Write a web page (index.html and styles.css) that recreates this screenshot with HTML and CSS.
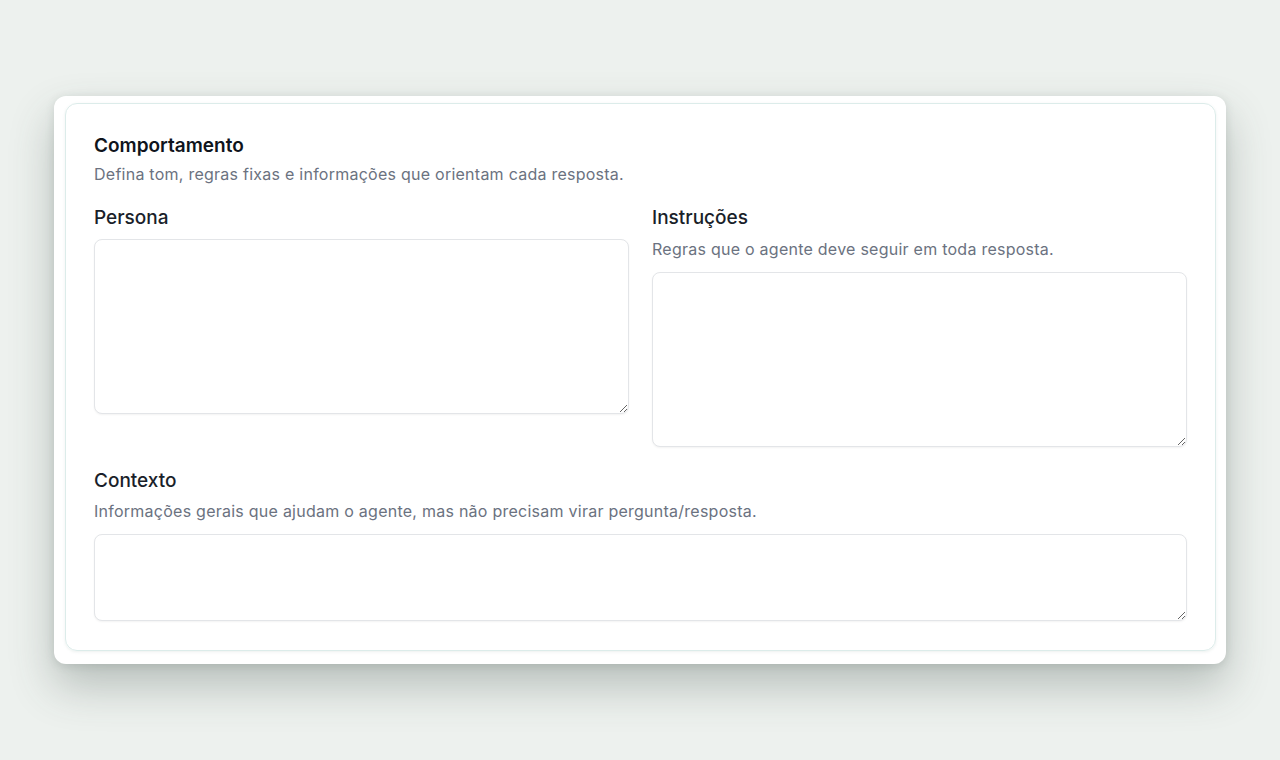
FILE: index.html
```html
<!DOCTYPE html>
<html lang="pt-BR">
<head>
    <meta charset="UTF-8">
    <title>Comportamento</title>
    <link rel="stylesheet" href="styles.css">
</head>
<body>

<div class="frame">
    <div class="card">
        <div class="card-head">
            <h2 class="card-title">Comportamento</h2>
            <p class="card-desc">Defina tom, regras fixas e informações que orientam cada resposta.</p>
        </div>

        <div class="field-row">
            <div class="field">
                <label class="field-label" for="persona">Persona</label>
                <textarea id="persona" class="field-input persona-input"></textarea>
            </div>
            <div class="field">
                <label class="field-label" for="instrucoes">Instruções</label>
                <p class="field-desc">Regras que o agente deve seguir em toda resposta.</p>
                <textarea id="instrucoes" class="field-input persona-input"></textarea>
            </div>
        </div>

        <div class="field field-wide">
            <label class="field-label" for="contexto">Contexto</label>
            <p class="field-desc">Informações gerais que ajudam o agente, mas não precisam virar pergunta/resposta.</p>
            <textarea id="contexto" class="field-input context-input"></textarea>
        </div>
    </div>
</div>

</body>
</html>
```

FILE: styles.css
```css
html, body, div, p, h2, label {
    padding: 0px;
    margin: 0px;
}

body {
    background: #edf1ee;
    font-family: Inter, "Noto Sans", "Liberation Sans", sans-serif;
    color: #111827;
    padding: 96px 54px 96px 54px;
    min-height: 760px;
    box-sizing: border-box;
}

.frame {
    background: #ffffff;
    border-radius: 12px;
    padding: 7px 10px 13px 11px;
    box-shadow: 0px 22px 44px rgba(60, 75, 68, 0.30), 0px 2px 10px rgba(60, 75, 68, 0.14);
}

.card {
    border: 1px solid #dcecea;
    border-radius: 12px;
    padding: 28px 28px 29px 28px;
    box-shadow: 0px 1px 3px rgba(120, 150, 140, 0.14);
}

.card-title {
    font-size: 19px;
    line-height: 28px;
    font-weight: 600;
    color: #0f141c;
}

.card-desc {
    margin-top: 3px;
    font-size: 16px;
    line-height: 22px;
    letter-spacing: 0.25px;
    color: #6b7280;
}

.field-row {
    display: grid;
    grid-template-columns: 1fr 1fr;
    column-gap: 23px;
    margin-top: 20px;
}

.field {
    display: flex;
    flex-direction: column;
}

.field-wide {
    margin-top: 21px;
}

.field-label {
    font-size: 19px;
    line-height: 26px;
    font-weight: 500;
    color: #1a1f2a;
}

.field-desc {
    margin-top: 7px;
    font-size: 16px;
    line-height: 22px;
    letter-spacing: 0.25px;
    color: #6b7280;
}

.field-wide .field-desc {
    margin-top: 6px;
}

.field-input {
    display: block;
    width: 100%;
    box-sizing: border-box;
    margin-top: 8px;
    border: 1px solid #e3e5e8;
    border-radius: 8px;
    background: #ffffff;
    font-family: inherit;
    font-size: 15px;
    padding: 10px 12px;
    outline: none;
    box-shadow: 0px 1px 2px rgba(0, 0, 0, 0.05);
}

.field-desc + .field-input {
    margin-top: 12px;
}

.persona-input {
    height: 175px;
    resize: vertical;
}

.context-input {
    height: 87px;
    resize: vertical;
}
```
